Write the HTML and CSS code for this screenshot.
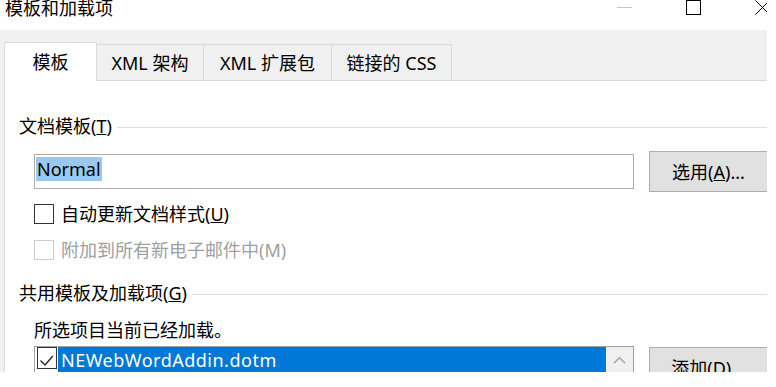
FILE: index.html
```html
<!DOCTYPE html>
<html lang="zh-CN">
<head>
<meta charset="utf-8">
<title>模板和加载项</title>
<link rel="stylesheet" href="styles.css">
</head>
<body>
<div class="viewport">
  <div class="window">
    <div class="titlebar">
      <div class="title">模板和加载项</div>
      <div class="controls">
        <div class="ctl"><svg width="15" height="1" viewBox="0 0 15 1"><rect width="15" height="1" fill="#c6c6c6"/></svg></div>
        <div class="ctl"><svg width="15" height="15" viewBox="0 0 15 15"><rect x="0.5" y="0.5" width="14" height="14" fill="none" stroke="#000" stroke-width="1"/></svg></div>
        <div class="ctl"><svg width="15" height="15" viewBox="0 0 15 15"><path d="M0.5 0.5L14.5 14.5M14.5 0.5L0.5 14.5" fill="none" stroke="#000" stroke-width="1"/></svg></div>
      </div>
    </div>
    <div class="dialog">
      <div class="tabs">
        <div class="tab active">模板</div>
        <div class="tab tab-xml">XML 架构</div>
        <div class="tab tab-ext">XML 扩展包</div>
        <div class="tab tab-css">链接的 CSS</div>
      </div>
      <div class="panel">
        <div class="group first">
          <span class="glabel">文档模板(<u>T</u>)</span>
          <span class="gline"></span>
        </div>
        <div class="template-row">
          <div class="input"><span class="sel">Normal</span></div>
          <div class="btn">选用(<u>A</u>)...</div>
        </div>
        <div class="check first-check">
          <span class="box"></span>
          <span>自动更新文档样式(<u>U</u>)</span>
        </div>
        <div class="check second-check disabled">
          <span class="box"></span>
          <span>附加到所有新电子邮件中(M)</span>
        </div>
        <div class="group second">
          <span class="glabel">共用模板及加载项(<u>G</u>)</span>
          <span class="gline"></span>
        </div>
        <div class="info">所选项目当前已经加载。</div>
        <div class="list-row">
          <div class="list">
            <div class="items">
              <div class="item">
                <span class="lbox"><svg width="18" height="20" viewBox="0 0 18 20"><polyline points="2.5,12.5 7,17 14.8,8" fill="none" stroke="#222" stroke-width="1.3"/></svg></span>
                <span class="ltext">NEWebWordAddin.dotm</span>
              </div>
            </div>
            <div class="scroll">
              <div class="sbtn"><svg width="13" height="7" viewBox="0 0 13 7"><polyline points="0.8,6.2 6.5,0.8 12.2,6.2" fill="none" stroke="#a6a6a6" stroke-width="1.5"/></svg></div>
            </div>
          </div>
          <div class="btn add">添加(<u>D</u>)...</div>
        </div>
      </div>
    </div>
  </div>
</div>
</body>
</html>
```
FILE: styles.css
```css
html, body {
  margin: 0;
  padding: 0;
  background: #ffffff;
}

body {
  font-family: "Noto Sans", "Noto Sans CJK SC", sans-serif;
  font-size: 18px;
  color: #000;
}

.viewport {
  width: 767px;
  height: 372px;
  overflow: hidden;
}

.window {
  width: 797px;
  margin-top: -15px;
  background: #fff;
}

.titlebar {
  height: 45px;
  display: flex;
  align-items: center;
}

.title {
  flex: 1;
  padding-left: 5px;
  line-height: 24px;
}

.controls {
  display: flex;
  height: 45px;
}

.ctl {
  width: 69px;
  display: flex;
  align-items: center;
  justify-content: center;
}

.ctl svg {
  display: block;
}

.dialog {
  background: #f0f0f0;
  padding: 12px 4px 0 4px;
  height: 400px;
}

.tabs {
  display: flex;
  align-items: flex-end;
  height: 38px;
}

.tab {
  box-sizing: border-box;
  height: 36px;
  border: 1px solid #d9d9d9;
  border-bottom: none;
  margin-left: -1px;
  display: flex;
  align-items: center;
  justify-content: center;
  line-height: 24px;
  background: #f0f0f0;
  white-space: nowrap;
}

.tab.active {
  width: 93px;
  height: 39px;
  margin-left: 0;
  margin-bottom: -1px;
  background: #fff;
  position: relative;
  z-index: 1;
}

.tab-xml { width: 108px; }
.tab-ext { width: 129px; }
.tab-css { width: 121px; }

.panel {
  background: #fff;
  border: 1px solid #d9d9d9;
  padding: 0 14px;
  height: 400px;
}

.group {
  display: flex;
  align-items: center;
  gap: 5px;
  height: 24px;
  line-height: 24px;
}

.group.first { margin-top: 33px; }
.group.second { margin-top: 19px; }

.glabel { white-space: nowrap; }

.gline {
  flex: 1;
  height: 1px;
  background: #dcdcdc;
  margin-top: 2px;
}

.template-row {
  display: flex;
  align-items: center;
  gap: 15px;
  margin-top: 13px;
  margin-left: 15px;
}

.input {
  box-sizing: border-box;
  width: 600px;
  height: 35px;
  border: 1px solid #acacac;
  padding: 2px 1px 0 1px;
  display: flex;
  align-items: flex-start;
  flex-shrink: 0;
}

.sel {
  background: #99c9ef;
  line-height: 24px;
  height: 24px;
  padding: 0 1px;
}

.btn {
  box-sizing: border-box;
  width: 119px;
  height: 41px;
  background: #e1e1e1;
  border: 1px solid #adadad;
  display: flex;
  align-items: center;
  justify-content: center;
  flex-shrink: 0;
  white-space: nowrap;
  line-height: 24px;
}

.check {
  display: flex;
  align-items: center;
  gap: 7px;
  height: 24px;
  line-height: 24px;
  margin-left: 15px;
}

.first-check { margin-top: 10px; }
.second-check { margin-top: 12px; }

.box {
  box-sizing: border-box;
  width: 20px;
  height: 20px;
  border: 1px solid #333;
  background: #fff;
}

.disabled { color: #a0a0a0; }
.disabled .box { border-color: #cccccc; }

.info {
  margin-top: 13px;
  margin-left: 15px;
  line-height: 24px;
  height: 24px;
}

.list-row {
  display: flex;
  align-items: flex-start;
  gap: 15px;
  margin-top: 4px;
  margin-left: 15px;
}

.list {
  box-sizing: border-box;
  width: 600px;
  height: 80px;
  border: 1px solid #a0a0a0;
  display: flex;
  flex-shrink: 0;
}

.items {
  flex: 1;
}

.item {
  display: flex;
  align-items: flex-start;
  height: 28px;
}

.lbox {
  box-sizing: border-box;
  width: 20px;
  height: 22px;
  margin: 0 1px 0 2px;
  border: 1px solid #333;
  background: #fff;
  display: flex;
}

.lbox svg { display: block; }

.ltext {
  flex: 1;
  background: #0078d7;
  color: #fff;
  height: 28px;
  line-height: 26px;
  padding-left: 3px;
  letter-spacing: 0.5px;
}

.scroll {
  width: 27px;
  background: #f0f0f0;
}

.sbtn {
  height: 27px;
  display: flex;
  align-items: center;
  justify-content: center;
}

.sbtn svg { display: block; }

.btn.add {
  margin-top: 1px;
}
```
